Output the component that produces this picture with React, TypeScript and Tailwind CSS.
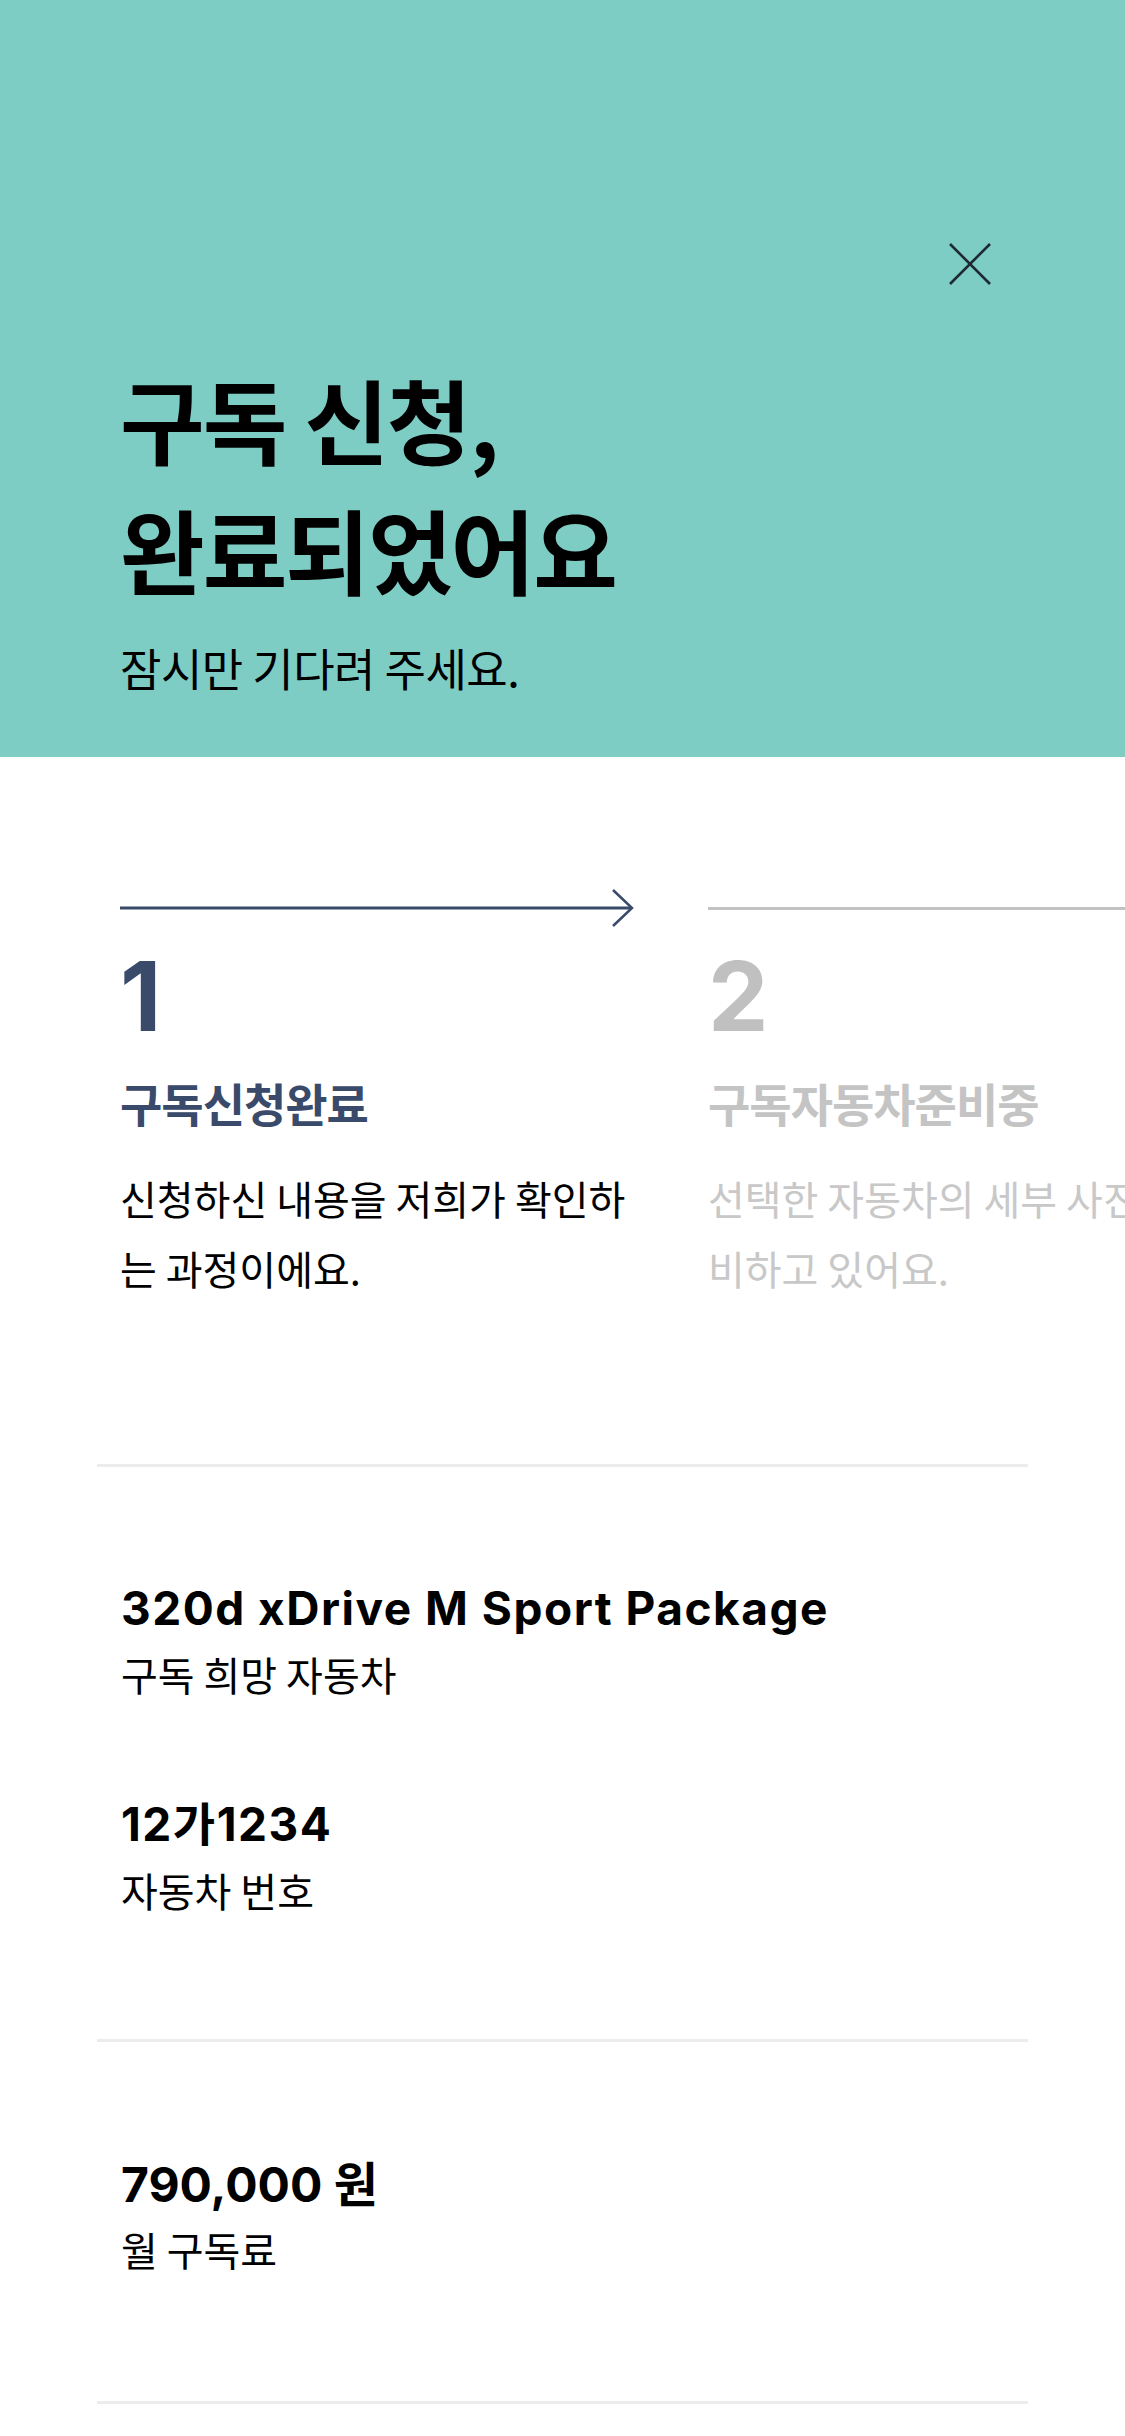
import { X } from 'lucide-react';

const KR = "font-['Noto_Sans_CJK_KR',sans-serif]";
const EN = "font-['Inter','Noto_Sans_CJK_KR',sans-serif]";

const STEPS = [
  {
    n: '1',
    title: '구독신청완료',
    lines: ['신청하신 내용을 저희가 확인하', '는 과정이에요.'],
    active: true,
  },
  {
    n: '2',
    title: '구독자동차준비중',
    lines: ['선택한 자동차의 세부 사진을 준', '비하고 있어요.'],
    active: false,
  },
];

const INFO = [
  [
    { value: '320d xDrive M Sport Package', label: '구독 희망 자동차' },
    { value: '12가1234', label: '자동차 번호' },
  ],
  [{ value: '790,000 원', label: '월 구독료', big: true }],
];

function StepArrow() {
  return (
    <svg width="514" height="40" viewBox="0 0 514 40" fill="none">
      <line x1="0" y1="20" x2="511" y2="20" stroke="#394a6a" strokeWidth="3" />
      <polyline points="493,2 512,20 493,38" stroke="#394a6a" strokeWidth="2.5" fill="none" />
    </svg>
  );
}

export default function App() {
  return (
    <div className="w-[1125px] min-h-[2436px] bg-white overflow-x-hidden">
      {/* Header */}
      <header className="bg-[#7ecdc5] pt-[243px] pb-[59px]">
        <div className="flex justify-end pr-[134px]">
          <button className="w-[42px] h-[42px] text-[#1c2a32]">
            <svg width="42" height="42" viewBox="0 0 42 42" fill="none">
              <line x1="1" y1="1" x2="41" y2="41" stroke="currentColor" strokeWidth="2.6" />
              <line x1="41" y1="1" x2="1" y2="41" stroke="currentColor" strokeWidth="2.6" />
            </svg>
          </button>
        </div>
        <div className="pl-[120px] mt-[68px]">
          <h1 className={`${KR} text-[92px] leading-[130px] font-bold tracking-[-2px] text-black`}>
            구독 신청,
            <br />
            완료되었어요
          </h1>
          <p className={`${KR} mt-[25px] text-[45px] leading-[60px] tracking-[-0.5px] text-black`}>
            잠시만 기다려 주세요.
          </p>
        </div>
      </header>

      {/* Steps */}
      <section className="mt-[131px] pl-[120px] flex gap-[76px]">
        {STEPS.map((s) => (
          <div key={s.n} className="w-[512px] shrink-0">
            {s.active ? (
              <StepArrow />
            ) : (
              <div className="h-[40px] flex items-center">
                <div className="h-[3px] w-[600px] bg-[#c2c2c2]" />
              </div>
            )}
            <div
              className={`${EN} mt-[20px] text-[96px] leading-[96px] font-bold ${
                s.active ? 'text-[#394a6a]' : 'text-[#c0c0c0]'
              }`}
            >
              {s.n}
            </div>
            <div
              className={`${KR} mt-[28px] text-[46px] leading-[60px] font-bold tracking-[-1px] whitespace-nowrap ${
                s.active ? 'text-[#394a6a]' : 'text-[#c4c4c4]'
              }`}
            >
              {s.title}
            </div>
            <div
              className={`${KR} mt-[31px] text-[40px] leading-[70px] whitespace-nowrap ${
                s.active ? 'text-black' : 'text-[#c8c8c8]'
              }`}
            >
              {s.lines.map((l) => (
                <div key={l}>{l}</div>
              ))}
            </div>
          </div>
        ))}
      </section>

      {/* Info */}
      <section className="mt-[161px] px-[97px]">
        {INFO.map((group, gi) => (
          <div key={gi} className="border-t-[3px] border-[#ececec] pl-[24px] pt-[113px] pb-[124px]">
            {group.map((item, i) => (
              <div key={item.value} className={i > 0 ? 'mt-[97px]' : ''}>
                <div
                  className={`${EN} font-bold text-black ${
                    item.big
                      ? 'text-[48px] leading-[60px]'
                      : 'text-[46px] leading-[56px] tracking-[1.5px]'
                  }`}
                >
                  {item.value}
                </div>
                <div
                  className={`${KR} text-[40px] leading-[50px] text-black ${
                    item.big ? 'mt-[9px]' : 'mt-[13px]'
                  }`}
                >
                  {item.label}
                </div>
              </div>
            ))}
          </div>
        ))}
        <div className="mt-[3px] border-t-[3px] border-[#ececec]" />
      </section>
    </div>
  );
}
